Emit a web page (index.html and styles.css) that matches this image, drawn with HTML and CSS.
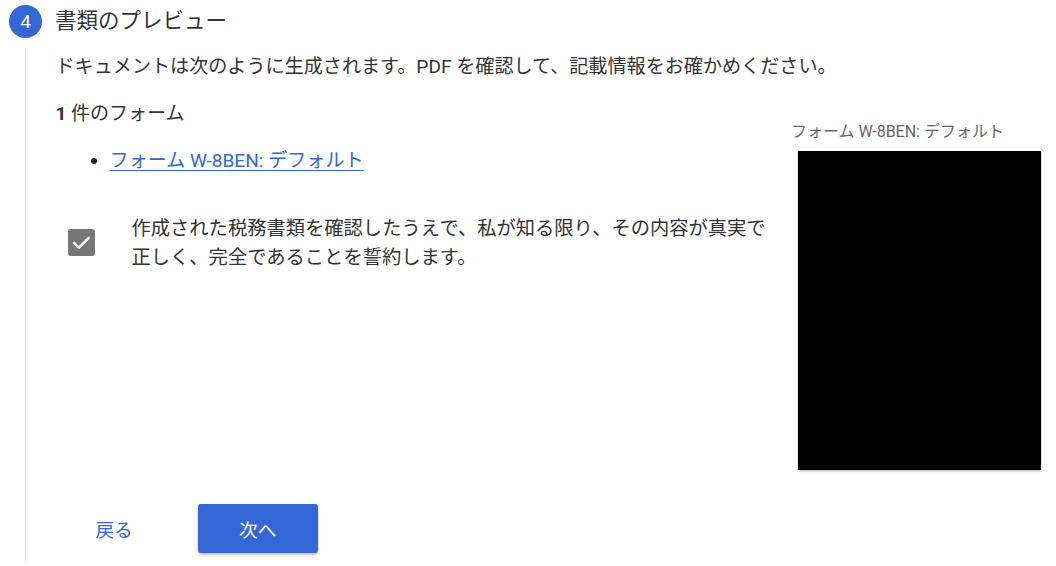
FILE: index.html
```html
<!DOCTYPE html>
<html lang="ja">
<head>
<meta charset="utf-8">
<title>書類のプレビュー</title>
<link rel="stylesheet" href="styles.css">
</head>
<body>
<section class="step">
  <header class="step-head">
    <span class="step-num">4</span>
    <h2 class="step-title">書類のプレビュー</h2>
  </header>
  <div class="step-body">
    <p class="desc">ドキュメントは次のように生成されます。PDF を確認して、記載情報をお確かめください。</p>
    <div class="cols">
      <div class="main">
        <p class="count"><b class="num">1</b> 件のフォーム</p>
        <ul class="forms">
          <li><a href="#" class="form-link">フォーム W-8BEN: デフォルト</a></li>
        </ul>
        <label class="agree">
          <span class="cbox">
            <svg viewBox="0 0 24 24" width="25" height="25"><path d="M5 12.5l4.5 4.4L19 7.5" fill="none" stroke="#fff" stroke-width="2.4" stroke-linecap="round" stroke-linejoin="round"/></svg>
          </span>
          <span class="agree-text">作成された税務書類を確認したうえで、私が知る限り、その内容が真実で正しく、完全であることを誓約します。</span>
        </label>
      </div>
      <aside class="preview">
        <div class="preview-cap">フォーム W-8BEN: デフォルト</div>
        <div class="preview-doc"></div>
      </aside>
    </div>
    <div class="actions">
      <button class="btn-back" type="button">戻る</button>
      <button class="btn-next" type="button">次へ</button>
    </div>
  </div>
</section>
</body>
</html>
```
FILE: styles.css
```css
* { box-sizing: border-box; }
html, body { margin: 0; padding: 0; background: #fff; }
body {
  font-family: Roboto, "Noto Sans CJK JP", sans-serif;
  color: #333;
  width: 1056px;
  height: 566px;
  overflow: hidden;
}
.step { padding: 5px 0 0 9px; }
.step-head {
  display: flex;
  align-items: center;
  height: 32px;
}
.step-num {
  width: 33px;
  height: 33px;
  border-radius: 50%;
  background: #3367d6;
  color: #fff;
  font-size: 19px;
  display: flex;
  align-items: center;
  justify-content: center;
  flex: none;
}
.step-title {
  margin: 0 0 0 13px;
  font-size: 21.5px;
  font-weight: 400;
  color: #333;
  line-height: 32px;
}
.step-body {
  margin: 12px 0 0 16px;
  border-left: 1.5px solid #e2e2e2;
  padding-left: 29.5px;
  height: 512px;
}
.desc {
  margin: 0;
  padding-top: 3px;
  font-size: 19.1px;
  line-height: 30px;
  color: #333;
  white-space: nowrap;
}
.cols {
  display: flex;
}
.main { flex: 1; }
.count {
  margin: 17px 0 0;
  font-size: 19px;
  line-height: 30px;
  color: #333;
}
.num { font-weight: 700; }
.forms {
  margin: 17px 0 0;
  padding-left: 54px;
  font-size: 19.1px;
  line-height: 30px;
}
.forms li::marker { color: #222; }
.form-link {
  color: #3367d6;
  text-decoration: underline;
  text-underline-offset: 3px;
  text-decoration-thickness: 1px;
}
.agree {
  display: flex;
  align-items: flex-start;
  margin-top: 38px;
  padding-left: 12px;
}
.cbox {
  width: 27px;
  height: 27px;
  margin-top: 15px;
  border-radius: 3px;
  background: #777;
  display: flex;
  align-items: center;
  justify-content: center;
  flex: none;
}
.agree-text {
  margin-left: 37px;
  width: 645px;
  font-size: 19.3px;
  line-height: 29px;
  color: #333;
}
.preview {
  width: 258px;
  flex: none;
  padding-top: 38px;
  margin-right: 6px;
}
.preview-cap {
  font-size: 16px;
  line-height: 24px;
  color: #666;
  margin-left: -1px;
}
.preview-doc {
  margin: 7px 0 0 6px;
  width: 243px;
  height: 319px;
  background: #000;
  box-shadow: 0 1px 2px rgba(0,0,0,0.3);
}
.actions {
  display: flex;
  align-items: center;
  margin-top: 34px;
  padding-left: 24px;
}
.btn-back {
  font: inherit;
  font-size: 18.6px;
  color: #3367d6;
  background: none;
  border: 0;
  padding: 0 8px;
  height: 47px;
  margin-left: 8px;
}
.btn-next {
  font: inherit;
  font-size: 18.6px;
  margin-left: 57px;
  width: 120px;
  height: 49px;
  border: 0;
  border-radius: 3px;
  background: #3367d6;
  color: #fff;
  box-shadow: 0 2px 3px rgba(0,0,0,0.25);
}
```
